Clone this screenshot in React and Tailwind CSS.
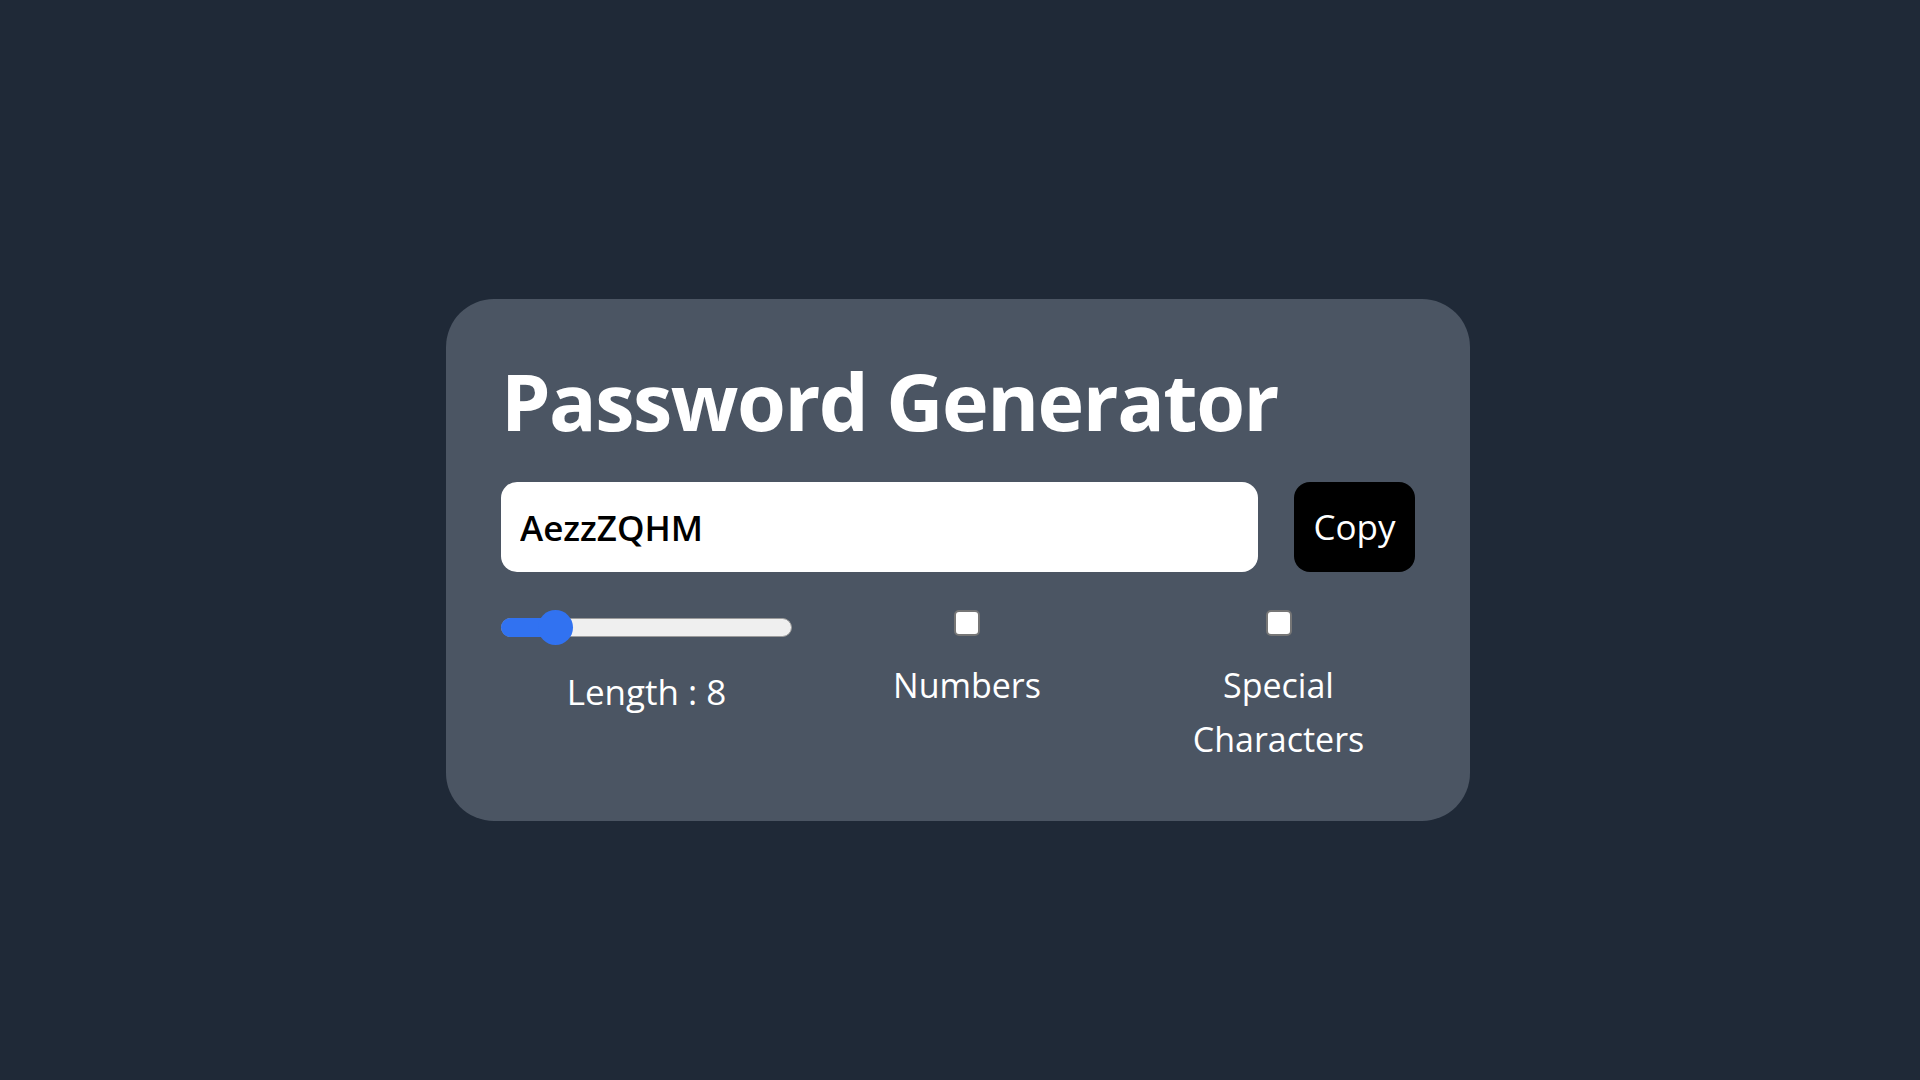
import { useState } from 'react';

export default function App() {
  const [length] = useState(8);
  const [password] = useState('AezzZQHM');
  const [numbers, setNumbers] = useState(false);
  const [chars, setChars] = useState(false);

  return (
    <div className="min-h-screen bg-[#1f2937] pt-[299px] font-['Open_Sans','Noto_Sans',sans-serif]">
      <div className="ml-[446px] w-[1024px] rounded-[48px] bg-[#4b5563] px-[55px] pt-[60px] pb-[55px]">
        <h1 className="h-[83px] text-[79px] font-bold leading-[83px] tracking-[-1.5px] text-white">Password Generator</h1>

        {/* password + copy */}
        <div className="mt-[40px] flex h-[90px] gap-[36px]">
          <input
            type="text"
            readOnly
            value={password}
            className="h-full flex-1 rounded-2xl bg-white px-[19px] text-[35px] font-semibold text-black outline-none"
          />
          <button className="h-full w-[121px] rounded-2xl bg-black text-[35px] text-white">Copy</button>
        </div>

        {/* options */}
        <div className="mt-[38px] grid grid-cols-[291px_350px_1fr] text-[34px] leading-[54px] text-white">
          <div className="flex flex-col items-center">
            <div className="relative flex h-[35px] w-[291px] items-center">
              <div className="h-[19px] w-full rounded-full border border-[#9b9b9b] bg-[#efefef]"></div>
              <div className="absolute left-0 h-[19px] w-[54px] rounded-l-full bg-[#3172f1]"></div>
              <div className="absolute left-[37px] h-[35px] w-[35px] rounded-full bg-[#3172f1]"></div>
            </div>
            <label className="mt-[20px] text-[35px]">Length : {length}</label>
          </div>

          <div className="flex flex-col items-center">
            <input
              type="checkbox"
              checked={numbers}
              onChange={(e) => setNumbers(e.target.checked)}
              className="h-[26px] w-[26px] appearance-none rounded-[5px] border-2 border-[#767676] bg-white"
            />
            <label className="mt-[22px]">Numbers</label>
          </div>

          <div className="flex flex-col items-center">
            <input
              type="checkbox"
              checked={chars}
              onChange={(e) => setChars(e.target.checked)}
              className="h-[26px] w-[26px] appearance-none rounded-[5px] border-2 border-[#767676] bg-white"
            />
            <label className="mt-[22px] max-w-[220px] text-center">Special Characters</label>
          </div>
        </div>
      </div>
    </div>
  );
}
